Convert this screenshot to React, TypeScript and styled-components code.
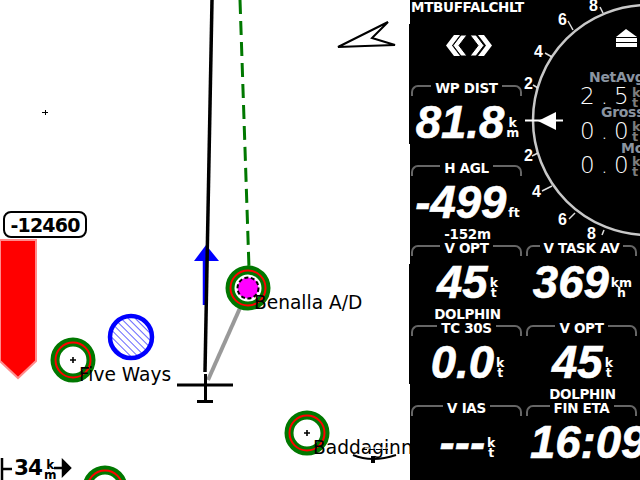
import React from "react";
import styled, { createGlobalStyle } from "styled-components";

const Global = createGlobalStyle`
  html, body { margin: 0; padding: 0; background: #fff; overflow: hidden; }
`;

const Screen = styled.div`
  width: 640px;
  height: 480px;
  display: flex;
  overflow: hidden;
  font-family: "DejaVu Sans", sans-serif;
`;

const MapArea = styled.div`
  position: relative;
  width: 410px;
  height: 480px;
  background: #fff;
  overflow: hidden;
  flex: none;
`;

const MapDrawing = styled.svg`
  position: absolute;
  left: 0;
  top: 0;
`;

const EdgeSliver = styled.div<{ $top: number }>`
  position: absolute;
  right: 0;
  top: ${(p) => p.$top}px;
  width: 1px;
  height: 120px;
  background: #000;
`;

const WaypointLabel = styled.span<{ $x: number; $y: number }>`
  position: absolute;
  left: ${(p) => p.$x}px;
  top: ${(p) => p.$y}px;
  font-size: 18.6px;
  line-height: 22px;
  color: #000;
  white-space: nowrap;
`;

const AltitudeBadge = styled.div`
  position: absolute;
  left: 3px;
  top: 211px;
  width: 80px;
  height: 23px;
  border: 2px solid #000;
  border-radius: 8px;
  background: #fff;
  display: flex;
  align-items: center;
  justify-content: center;
  font-weight: 700;
  font-size: 19px;
  color: #000;
  letter-spacing: -0.8px;
`;

const DistanceMarker = styled.div`
  position: absolute;
  left: 0;
  bottom: 0;
  height: 22px;
  display: flex;
  align-items: flex-end;
  color: #000;
`;

const DistanceValue = styled.span`
  font-weight: 700;
  font-size: 21.5px;
  line-height: 24px;
  margin-left: 14px;
  letter-spacing: -1px;
`;

const MapUnit = styled.span`
  display: flex;
  flex-direction: column;
  font-weight: 700;
  font-size: 12px;
  line-height: 10px;
  text-align: center;
  margin-left: 2px;
`;

const Panel = styled.div`
  width: 230px;
  height: 480px;
  flex: none;
  background: #000;
  display: grid;
  grid-template-columns: 115px 115px;
  grid-template-rows: repeat(6, 80px);
  grid-auto-flow: column;
  color: #fff;
  overflow: hidden;
`;

const Cell = styled.div`
  position: relative;
  display: flex;
  flex-direction: column;
  min-width: 0;
  height: 80px;
`;

const TitleBar = styled.div`
  display: flex;
  align-items: flex-start;
  height: 16px;
  padding: 1px 3px 0 1px;
  gap: 4px;
`;

const FrameSide = styled.div<{ $right?: boolean }>`
  flex: 1;
  height: 9px;
  margin-top: 4px;
  border-top: 2px solid #666;
  ${(p) =>
    p.$right
      ? "border-right: 2px solid #666; border-top-right-radius: 7px;"
      : "border-left: 2px solid #666; border-top-left-radius: 7px;"}
`;

const Title = styled.span`
  font-weight: 700;
  font-size: 13.5px;
  line-height: 14px;
  letter-spacing: -0.3px;
  color: #fff;
  white-space: nowrap;
  position: relative;
`;

const ValueRow = styled.div<{ $lead?: number }>`
  flex: 1;
  display: flex;
  align-items: center;
  justify-content: ${(p) => (p.$lead !== undefined ? "flex-start" : "center")};
  padding-left: ${(p) => p.$lead ?? 0}px;
  height: 50px;
  min-height: 0;
  white-space: nowrap;
`;

const Value = styled.span`
  font-family: "Liberation Sans", sans-serif;
  font-style: italic;
  font-weight: 700;
  font-size: 45.5px;
  line-height: 50px;
  color: #fff;
  -webkit-text-stroke: 0.6px #fff;
`;

const Unit = styled.span`
  display: flex;
  flex-direction: column;
  align-self: flex-end;
  align-items: center;
  margin: 0 0 10px 2px;
  font-weight: 700;
  font-size: 12.5px;
  line-height: 10px;
  color: #fff;
`;

const Comment = styled.div`
  height: 12px;
  line-height: 12px;
  font-weight: 700;
  font-size: 13.5px;
  letter-spacing: -0.3px;
  text-align: center;
  white-space: nowrap;
  color: #fff;
`;

const WaypointName = styled.div`
  font-weight: 700;
  font-size: 13.5px;
  letter-spacing: -0.3px;
  line-height: 15px;
  padding-left: 1px;
  color: #fff;
  white-space: nowrap;
`;

const ChevronIcon = styled.svg`
  display: block;
  margin: 20px 0 0 36px;
`;

const Gauge = styled.div`
  position: relative;
  grid-row: span 3;
  width: 115px;
  height: 240px;
`;

const GaugeDrawing = styled.svg`
  position: absolute;
  left: 0;
  top: 0;
`;

const TickLabel = styled.span<{ $x: number; $y: number }>`
  position: absolute;
  left: ${(p) => p.$x}px;
  top: ${(p) => p.$y}px;
  font-family: "Liberation Sans", sans-serif;
  font-weight: 700;
  font-size: 16px;
  line-height: 14px;
  color: #fff;
`;

const VarioTitle = styled.span<{ $x: number; $y: number }>`
  position: absolute;
  left: ${(p) => p.$x}px;
  top: ${(p) => p.$y}px;
  font-weight: 700;
  font-size: 14px;
  letter-spacing: -0.3px;
  line-height: 14px;
  color: #8a94a0;
  white-space: nowrap;
`;

const VarioValue = styled.span<{ $y: number }>`
  position: absolute;
  left: 55px;
  top: ${(p) => p.$y}px;
  font-weight: 200;
  font-size: 23px;
  line-height: 24px;
  letter-spacing: 6px;
  color: #fff;
  white-space: nowrap;
`;

const VarioUnit = styled.span<{ $y: number }>`
  position: absolute;
  left: 107px;
  top: ${(p) => p.$y}px;
  display: flex;
  flex-direction: column;
  font-weight: 700;
  font-size: 13px;
  line-height: 10px;
  color: #7d7d7d;
`;

const ticks = [
  [8, 85, 13, 88],
  [20, 53, 27, 57],
  [43, 21, 48, 30],
  [75, 7, 78, 13],
  [7, 156, 13, 153],
  [17, 191, 27, 186],
  [44, 219, 50, 213],
  [77, 235, 79, 230],
];

const tickLabels: [string, number, number][] = [
  ["2", -1, 77],
  ["4", 9, 45],
  ["6", 33, 13],
  ["8", 64, -1],
  ["2", -1, 149],
  ["4", 7, 185],
  ["6", 33, 213],
  ["8", 62, 227],
];

const RingWaypoint = ({ x, y }: { x: number; y: number }) => (
  <g>
    <circle cx={x} cy={y} r={18} fill="#fff" stroke="#007800" strokeWidth={9} />
    <circle cx={x} cy={y} r={17.5} fill="none" stroke="#ff0000" strokeWidth={2} />
    <path d={`M${x - 3} ${y}H${x + 3}M${x} ${y - 3}V${y + 3}`} stroke="#000" strokeWidth={1.6} />
  </g>
);

const Field = ({
  title,
  value,
  unit,
  comment,
  lead,
}: {
  title: string;
  value: string;
  unit: string[];
  comment?: string;
  lead?: number;
}) => (
  <Cell>
    <TitleBar>
      <FrameSide />
      <Title>{title}</Title>
      <FrameSide $right />
    </TitleBar>
    <ValueRow $lead={lead}>
      <Value>{value}</Value>
      {unit.length > 0 && (
        <Unit>
          {unit.map((u) => (
            <span key={u}>{u}</span>
          ))}
        </Unit>
      )}
    </ValueRow>
    <Comment>{comment}</Comment>
  </Cell>
);

export default function App() {
  return (
    <Screen>
      <Global />
      <MapArea>
        <MapDrawing width={410} height={480} viewBox="0 0 410 480">
          <defs>
            <pattern id="hatch" width="5" height="5" patternUnits="userSpaceOnUse" patternTransform="rotate(-45)">
              <rect width="5" height="5" fill="#fff" />
              <line x1="0" y1="0" x2="0" y2="5" stroke="#0000ff" strokeWidth="1.2" />
            </pattern>
          </defs>
          <path d="M0 240H36V361L18 378L0 361Z" fill="#ff0000" stroke="#ff8c8c" strokeWidth={2} />
          <path d="M42 112H48V113H42ZM44.500 110H45.500V115H44.500Z" fill="#000" shapeRendering="crispEdges" />
          <circle cx={131} cy={337} r={21} fill="url(#hatch)" stroke="#0000ff" strokeWidth={4.5} />
          <RingWaypoint x={73} y={360} />
          <RingWaypoint x={307} y={433} />
          <RingWaypoint x={105} y={488} />
          <path d="M240 0L249 268" stroke="#007800" strokeWidth={3} strokeDasharray="14 7" fill="none" />
          <path d="M240 308L208 380" stroke="#999" strokeWidth={4} fill="none" />
          <path d="M204.500 305V260" stroke="#0000ff" strokeWidth={3.500} />
          <path d="M194 261L206 245L219 261Z" fill="#0000ff" />
          <path d="M212 0L205 372" stroke="#000" strokeWidth={3.500} fill="none" />
          <path d="M177 385H233M205.500 374V402M197 401.500H213" stroke="#000" strokeWidth={3} fill="none" />
          <circle cx={248} cy={288} r={18} fill="#fff" stroke="#007800" strokeWidth={9} />
          <circle cx={248} cy={288} r={17.500} fill="none" stroke="#ff0000" strokeWidth={2} />
          <circle cx={248} cy={288} r={10.500} fill="#ff00ff" stroke="#000" strokeWidth={2} strokeDasharray="4 2.500" />
          <path d="M338 47L388 22L372 38L395 45L365 46Z" fill="#fff" stroke="#000" strokeWidth={2} />
          <path d="M2 458V480M2 469H12" stroke="#000" strokeWidth={2.500} />
          <path d="M54 468H65M63 461L70 468L63 475Z" stroke="#000" strokeWidth={2.500} fill="#000" />
        </MapDrawing>
        <WaypointLabel $x={254} $y={292}>Benalla A/D</WaypointLabel>
        <WaypointLabel $x={79} $y={364}>Five Ways</WaypointLabel>
        <WaypointLabel $x={313} $y={437}>Baddaginn</WaypointLabel>
        <MapDrawing width={410} height={480} viewBox="0 0 410 480">
          <path d="M365 448H390" stroke="#fff" strokeWidth={1} strokeDasharray="5 2" />
          <path d="M362 449.500H388" stroke="#000" strokeWidth={1} strokeDasharray="5 2" />
          <path d="M353 455Q372 463 396 455" stroke="#000" strokeWidth={2} fill="none" />
          <path d="M373 456V463" stroke="#000" strokeWidth={4} />
        </MapDrawing>
        <AltitudeBadge>-12460</AltitudeBadge>
        <DistanceMarker>
          <DistanceValue>34</DistanceValue>
          <MapUnit>
            <span>k</span>
            <span>m</span>
          </MapUnit>
        </DistanceMarker>
        <EdgeSliver $top={24} />
        <EdgeSliver $top={264} />
      </MapArea>
      <Panel>
        <Cell>
          <WaypointName>MTBUFFALCHLT</WaypointName>
          <ChevronIcon width="46" height="22" viewBox="0 0 46 22">
            <path d="M8 0H14L6 10.500L14 21H8L0 10.500Z" fill="#fff" />
            <path d="M15 0H21L13 10.500L21 21H15L7 10.500Z" fill="#fff" stroke="#000" strokeWidth={1} />
            <path d="M32 0H38L46 10.500L38 21H32L40 10.500Z" fill="#fff" />
            <path d="M24 0H30L38 10.500L30 21H24L32 10.500Z" fill="#fff" stroke="#000" strokeWidth={1} />
          </ChevronIcon>
        </Cell>
        <Field title="WP DIST" value="81.8" unit={["k", "m"]} />
        <Field title="H AGL" value="-499" unit={["ft"]} comment="-152m" />
        <Field title="V OPT" value="45" unit={["k", "t"]} comment="DOLPHIN" />
        <Field title="TC 30S" value="0.0" unit={["k", "t"]} />
        <Field title="V IAS" value="---" unit={["k", "t"]} />
        <Gauge>
          <GaugeDrawing width={115} height={240} viewBox="0 0 115 240">
            <circle cx={123} cy={120} r={115} fill="none" stroke="#c8c8c8" strokeWidth={2.5} />
            {ticks.map(([a, b, c, d]) => (
              <line key={`${a}-${b}`} x1={a} y1={b} x2={c} y2={d} stroke="#ddd" strokeWidth={1.5} />
            ))}
            <path d="M0 120.500H38" stroke="#fff" strokeWidth={2} />
            <path d="M13 121L31 112V130Z" fill="#fff" />
            <path d="M91 37L101 29L112 37Z" fill="#fff" />
            <rect x={91} y={38} width={21} height={4} fill="#fff" />
            <rect x={91} y={43} width={21} height={4} fill="#fff" />
          </GaugeDrawing>
          {tickLabels.map(([t, x, y]) => (
            <TickLabel key={`${x}-${y}`} $x={x} $y={y}>{t}</TickLabel>
          ))}
          <VarioTitle $x={64} $y={70}>NetAvg</VarioTitle>
          <VarioValue $y={84}>2.5</VarioValue>
          <VarioUnit $y={88}><span>k</span><span>t</span></VarioUnit>
          <VarioTitle $x={76} $y={105}>Gross</VarioTitle>
          <VarioValue $y={119}>0.0</VarioValue>
          <VarioUnit $y={122}><span>k</span><span>t</span></VarioUnit>
          <VarioTitle $x={96} $y={141}>Mc</VarioTitle>
          <VarioValue $y={153}>0.0</VarioValue>
          <VarioUnit $y={157}><span>k</span><span>t</span></VarioUnit>
        </Gauge>
        <Field title="V TASK AV" value="369" unit={["km", "h"]} />
        <Field title="V OPT" value="45" unit={["k", "t"]} comment="DOLPHIN" />
        <Field title="FIN ETA" value="16:09" unit={[]} lead={5} />
      </Panel>
    </Screen>
  );
}
